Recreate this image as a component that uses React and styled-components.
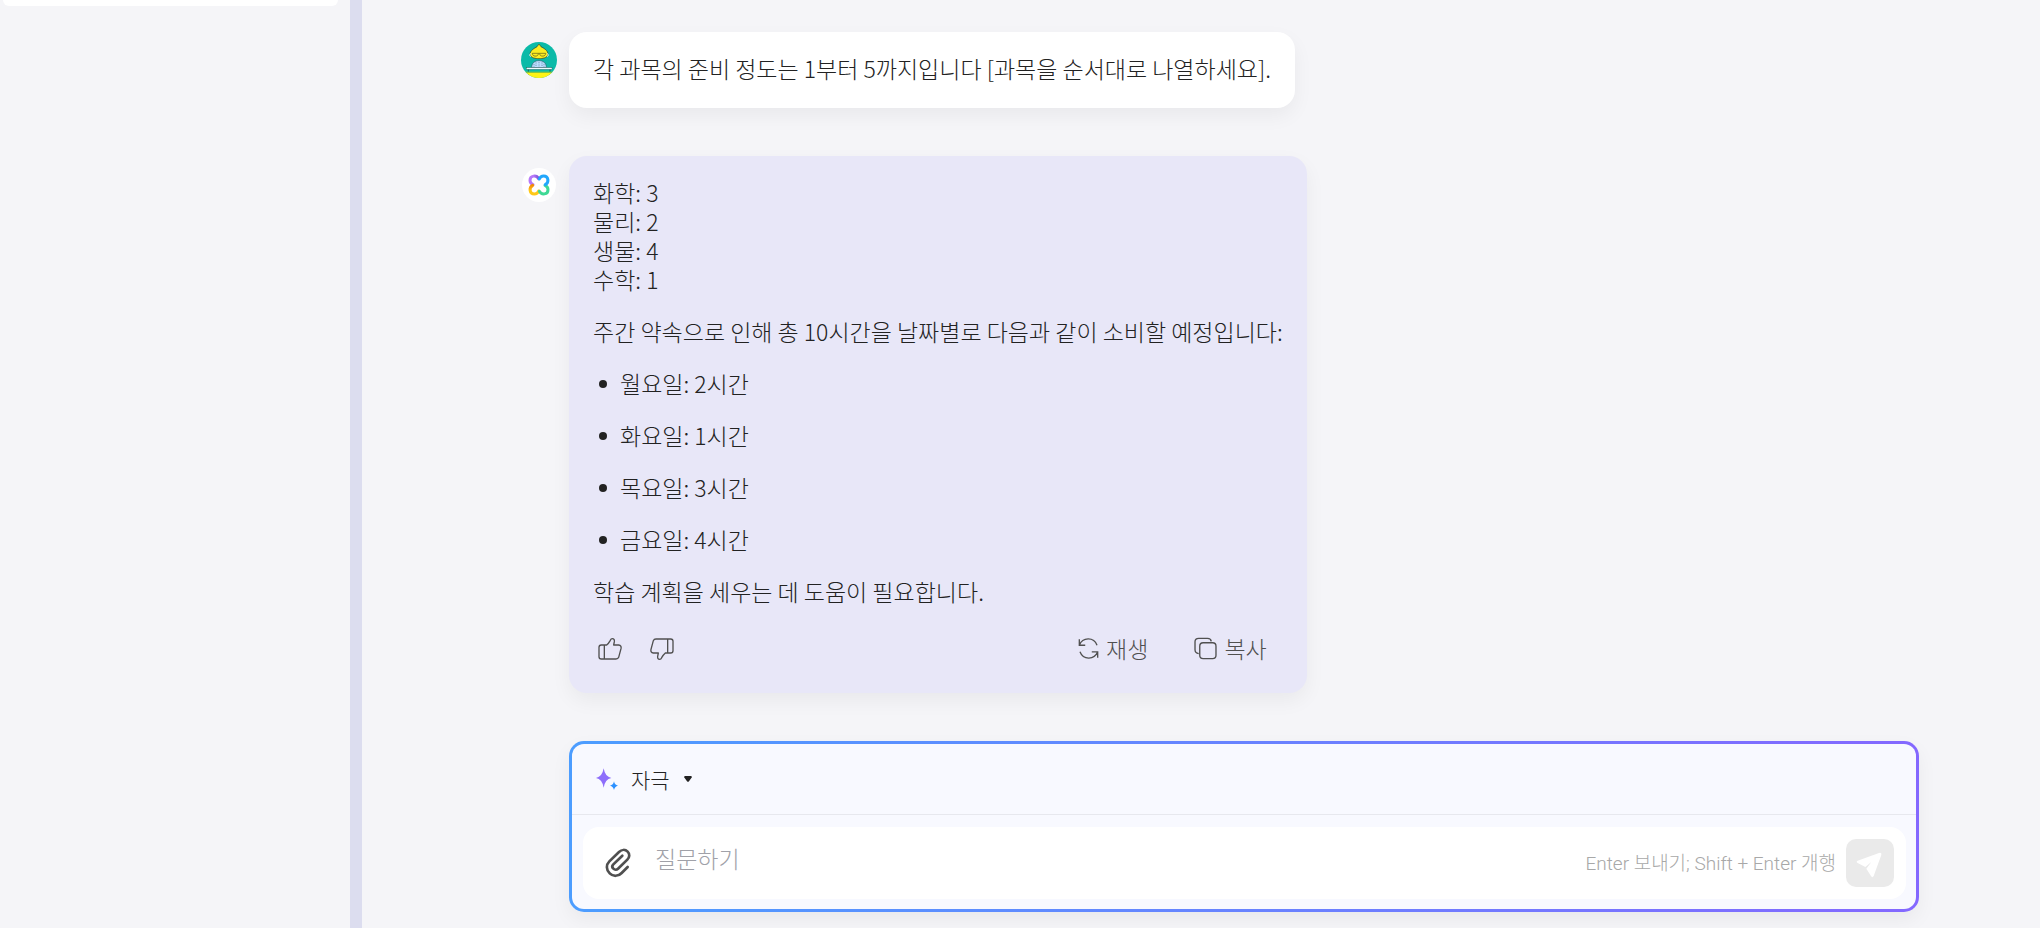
import styled, { createGlobalStyle } from 'styled-components';

const GlobalStyle = createGlobalStyle`
    * {
        box-sizing: border-box;
    }
    body {
        margin: 0;
        background: #f5f5f8;
        color: #222;
        font-family: 'Noto Sans CJK KR', sans-serif;
        font-size: 23px;
        font-weight: 300;
        line-height: 29px;
    }
    button, select, textarea {
        margin: 0;
        padding: 0;
        border: none;
        background: none;
        color: inherit;
        font: inherit;
    }
    button, select {
        cursor: pointer;
    }
`;

const Page = styled.div`
    display: flex;
    min-height: 100vh;
`;

const Sidebar = styled.aside`
    width: 362px;
    flex-shrink: 0;
    padding: 0 12px 0 3px;
    border-right: 12px solid #dcddef;
`;

const SidebarCard = styled.div`
    height: 6px;
    border-radius: 0 0 10px 10px;
    background: #fff;
`;

const Main = styled.main`
    flex: 1;
    min-width: 0;
    padding: 32px 121px 16px 159px;
`;

const Message = styled.article`
    display: flex;
    align-items: flex-start;
    gap: 12px;
    margin-bottom: 48px;
`;

const Avatar = styled.div`
    width: 36px;
    flex-shrink: 0;
    padding-top: 10px;
    svg {
        display: block;
    }
`;

const Bubble = styled.div`
    padding: 22px 24px 25px;
    border-radius: 18px;
    background: ${({ $tinted }) => ($tinted ? '#e8e7f8' : '#fff')};
    box-shadow: 0 8px 20px rgba(0, 0, 0, 0.05);
`;

const Text = styled.p`
    margin: 0;
    white-space: pre-line;
`;

const Answer = styled.div`
    display: flex;
    flex-direction: column;
    gap: 23px;
`;

const DayList = styled.ul`
    display: flex;
    flex-direction: column;
    gap: 23px;
    margin: 0;
    padding: 0 0 0 6px;
    list-style: none;
`;

const Day = styled.li`
    display: flex;
    align-items: center;
    gap: 13px;
    &::before {
        content: '';
        width: 8px;
        height: 8px;
        border-radius: 50%;
        background: #222;
    }
`;

const Actions = styled.div`
    display: flex;
    align-items: center;
    height: 39px;
    padding: 0 16px 0 5px;
    color: #505050;
`;

const Votes = styled.div`
    display: flex;
    gap: 28px;
    margin-right: auto;
`;

const IconButton = styled.button`
    display: flex;
    svg {
        display: block;
    }
`;

const TextButton = styled.button`
    display: flex;
    align-items: center;
    gap: 7px;
    margin-left: 46px;
`;

const Composer = styled.form`
    margin-left: 48px;
    border: 3px solid transparent;
    border-radius: 15px;
    background:
        linear-gradient(#f8f9ff, #f8f9ff) padding-box,
        linear-gradient(90deg, #4c9dff, #8468ff) border-box;
    box-shadow: 0 8px 20px rgba(0, 0, 0, 0.05);
`;

const ComposerHead = styled.div`
    display: flex;
    align-items: center;
    height: 71px;
    padding: 0 23px;
    border-bottom: 1px solid #e7e8ee;
`;

const ModePicker = styled.label`
    position: relative;
    display: flex;
    align-items: center;
    svg:last-child {
        position: absolute;
        right: 0;
        pointer-events: none;
    }
`;

const ModeSelect = styled.select`
    appearance: none;
    margin-left: 12px;
    padding-right: 22px;
    font-size: 21px;
    outline: none;
`;

const InputRow = styled.div`
    display: flex;
    align-items: center;
    height: 72px;
    margin: 12px 10px 10px 11px;
    padding: 0 12px 0 22px;
    border-radius: 16px;
    background: #fff;
    color: #505050;
`;

const Question = styled.textarea`
    flex: 1;
    min-width: 0;
    height: 38px;
    margin-left: 24px;
    outline: none;
    resize: none;
    overflow: hidden;
    &::placeholder {
        color: #a0a1a8;
    }
`;

const Hint = styled.span`
    margin-right: 10px;
    color: #a8a8a8;
    font-family: Roboto, 'Noto Sans CJK KR', sans-serif;
    font-size: 19px;
`;

const SendButton = styled.button`
    width: 48px;
    height: 48px;
    border-radius: 10px;
    background: #eaeaea;
    svg {
        display: block;
    }
`;

const UserPicture = () => (
    <svg width="36" height="36" viewBox="0 0 108 108" aria-hidden="true">
        <clipPath id="userCircle">
            <circle cx="54" cy="54" r="54" />
        </clipPath>
        <g clipPath="url(#userCircle)">
            <rect width="108" height="108" fill="#0bbaa8" />
            <path d="M27 38c0-14 14-19 21-24 3-2 3-7 6-7s3 5 6 7c8 5 21 10 21 24-3 10-17 12-27 12S30 48 27 38z" fill="#fbed21" stroke="#343b24" strokeWidth="2" />
            <path d="M29 34c-3 0-4 9 0 10M79 34c3 0 4 9 0 10" fill="none" stroke="#d9eeee" strokeWidth="3" />
            <path d="M34 34h40M34 34c0 11 18 11 18 1M56 35c0 10 18 10 18-1" fill="none" stroke="#5b5718" strokeWidth="2" />
            <path d="M32 77c0-16 11-21 22-21s22 5 22 21z" fill="#bcdfff" stroke="#315f70" strokeWidth="2" />
            <path d="M45 61v16M54 60v17M63 61v16M39 66v10M69 66v10" stroke="#567d96" strokeWidth="2" strokeDasharray="4 3" />
            <path d="M22 81v27M87 81v27" stroke="#123f3c" strokeWidth="2" />
            <rect x="16" y="77" width="77" height="5" fill="#eefcff" stroke="#263d3c" strokeWidth="1" />
            <rect x="0" y="89" width="108" height="4" fill="#8ac53f" />
            <rect x="0" y="93" width="108" height="15" fill="#fff315" />
        </g>
    </svg>
);

const BotPicture = () => (
    <svg width="36" height="36" viewBox="-3 -6 108 108" aria-hidden="true">
        <defs>
            <linearGradient id="petalPurple">
                <stop offset="0.4" stopColor="#b779f9" />
                <stop offset="1" stopColor="#7952d9" />
            </linearGradient>
            <linearGradient id="petalYellow">
                <stop offset="0.4" stopColor="#ffc817" />
                <stop offset="1" stopColor="#f18a0a" />
            </linearGradient>
        </defs>
        <circle cx="51" cy="51" r="51" fill="#fff" />
        <g fill="none" strokeWidth="9" strokeLinecap="round">
            <path d="M50 32C43 20 24 22 24 37c0 7 4 11 9 13" stroke="url(#petalPurple)" />
            <path d="M50 32C43 20 24 22 24 37c0 7 4 11 9 13" stroke="url(#petalYellow)" transform="rotate(-90 51 51)" />
            <path d="M50 32C43 20 24 22 24 37c0 7 4 11 9 13" stroke="#3fd995" transform="rotate(180 51 51)" />
            <path d="M50 32C43 20 24 22 24 37c0 7 4 11 9 13" stroke="#22a7fc" transform="rotate(90 51 51)" />
        </g>
    </svg>
);

const Thumb = ({ down }) => (
    <svg width="24" height="24" viewBox="0 0 72 68" fill="none" stroke="currentColor" strokeWidth="4" aria-hidden="true">
        <g transform={down ? 'rotate(180 36 34)' : undefined}>
            <path d="M19 23v41M10 64h44q6 0 8-5l7-26q2-10-7-11H47l2-10q1-9-6-9-4 0-6 5-5 9-11 14H10q-7 0-7 7v28q0 7 7 7z" strokeLinejoin="round" />
        </g>
    </svg>
);

const Refresh = () => (
    <svg width="21" height="21" viewBox="0 0 64 64" fill="none" stroke="currentColor" strokeWidth="4" aria-hidden="true">
        <path d="M4 4v18h18M4 22C14-3 48-4 58 22" />
        <path d="M4 4v18h18M4 22C14-3 48-4 58 22" transform="rotate(180 32 32)" />
    </svg>
);

const Copy = () => (
    <svg width="23" height="23" viewBox="0 0 68 68" fill="none" stroke="currentColor" strokeWidth="4" aria-hidden="true">
        <path d="M14 49Q3 48 3 38V14Q3 4 14 4h26q10 0 11 9" />
        <rect x="17" y="17" width="48" height="47" rx="10" />
    </svg>
);

const Sparkles = () => (
    <svg width="24" height="23" viewBox="0 0 72 69" aria-hidden="true">
        <path d="M26 1q4 25 23 29-19 4-23 29Q22 34 3 30 22 26 26 1z" fill="#8e6efb" />
        <path d="M57 40q2 11 12 13-10 2-12 13-2-11-12-13 10-2 12-13z" fill="#2b90ff" />
    </svg>
);

const Caret = () => (
    <svg width="8" height="6" viewBox="0 0 24 18" fill="#222" aria-hidden="true">
        <path d="M3 0h18q5 2 1 6l-7 10q-3 3-6 0L2 6q-4-4 1-6z" />
    </svg>
);

const Clip = () => (
    <svg width="26" height="30" viewBox="0 0 78 90" fill="none" stroke="currentColor" strokeWidth="8" strokeLinecap="round" aria-hidden="true">
        <path d="M68 57 50 75C40 86 24 86 14 76 3 66 3 50 13 40l29-28c8-8 19-8 26-1 7 7 6 17-1 24L39 62c-4 4-10 4-14 0-4-4-4-9 0-13l27-26" />
    </svg>
);

const Plane = () => (
    <svg width="48" height="48" viewBox="0 0 144 144" fill="#fff" aria-hidden="true">
        <path d="m35 65 64-23q9-2 7 6l-23 63q-4 7-8 0L61 89l15-20-18 15-23-12q-6-4 0-7z" />
    </svg>
);

const subjects = ['화학: 3', '물리: 2', '생물: 4', '수학: 1'];

const days = ['월요일: 2시간', '화요일: 1시간', '목요일: 3시간', '금요일: 4시간'];

const App = () => (
    <>
        <GlobalStyle />
        <Page>
            <Sidebar>
                <SidebarCard />
            </Sidebar>
            <Main>
                <Message>
                    <Avatar>
                        <UserPicture />
                    </Avatar>
                    <Bubble>
                        <Text>각 과목의 준비 정도는 1부터 5까지입니다 [과목을 순서대로 나열하세요].</Text>
                    </Bubble>
                </Message>
                <Message>
                    <Avatar>
                        <BotPicture />
                    </Avatar>
                    <Bubble $tinted>
                        <Answer>
                            <Text>{subjects.join('\n')}</Text>
                            <Text>주간 약속으로 인해 총 10시간을 날짜별로 다음과 같이 소비할 예정입니다:</Text>
                            <DayList>
                                {days.map((day) => (
                                    <Day key={day}>{day}</Day>
                                ))}
                            </DayList>
                            <Text>학습 계획을 세우는 데 도움이 필요합니다.</Text>
                            <Actions>
                                <Votes>
                                    <IconButton type="button" aria-label="좋아요">
                                        <Thumb />
                                    </IconButton>
                                    <IconButton type="button" aria-label="싫어요">
                                        <Thumb down />
                                    </IconButton>
                                </Votes>
                                <TextButton type="button">
                                    <Refresh />
                                    재생
                                </TextButton>
                                <TextButton type="button">
                                    <Copy />
                                    복사
                                </TextButton>
                            </Actions>
                        </Answer>
                    </Bubble>
                </Message>
                <Composer onSubmit={(e) => e.preventDefault()}>
                    <ComposerHead>
                        <ModePicker>
                            <Sparkles />
                            <ModeSelect aria-label="모드">
                                <option>자극</option>
                            </ModeSelect>
                            <Caret />
                        </ModePicker>
                    </ComposerHead>
                    <InputRow>
                        <IconButton type="button" aria-label="파일 첨부">
                            <Clip />
                        </IconButton>
                        <Question rows={1} placeholder="질문하기" aria-label="질문하기" />
                        <Hint>Enter 보내기; Shift + Enter 개행</Hint>
                        <SendButton type="submit" aria-label="보내기">
                            <Plane />
                        </SendButton>
                    </InputRow>
                </Composer>
            </Main>
        </Page>
    </>
);

export default App;
